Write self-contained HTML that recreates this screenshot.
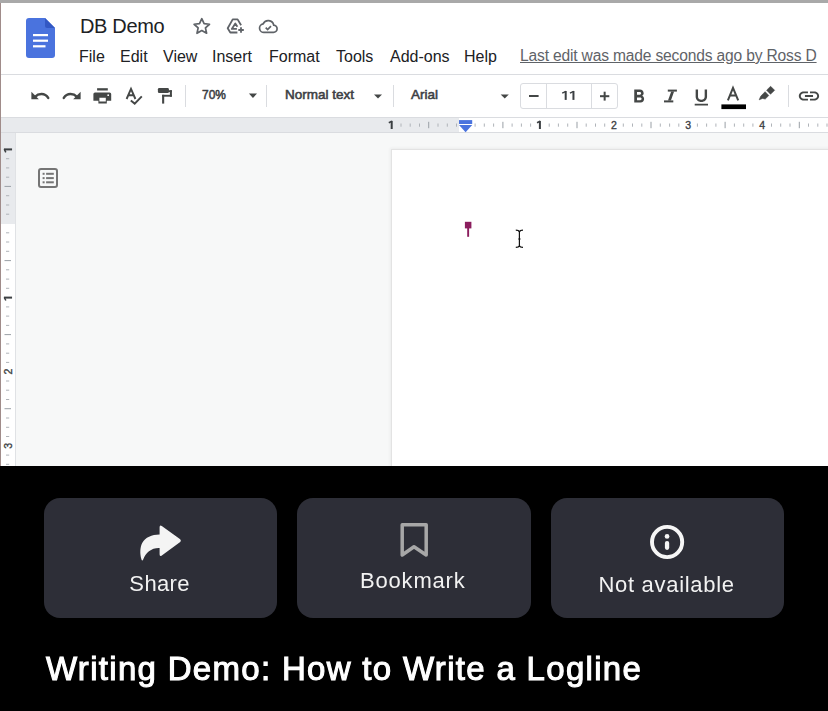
<!DOCTYPE html>
<html><head><meta charset="utf-8">
<style>
*{margin:0;padding:0;box-sizing:border-box}
html,body{width:828px;height:711px;overflow:hidden;background:#000;font-family:"Liberation Sans",sans-serif}
.a{position:absolute}
.ctext,.vt{will-change:transform}
.t{position:absolute;white-space:nowrap;line-height:1}
#app{position:absolute;left:0;top:0;width:828px;height:466px;background:#fff;overflow:hidden}
.menu{font-size:16px;color:#202124}
.rd{font-family:"Liberation Sans",sans-serif;font-size:10.5px;fill:#3c4043;stroke:#3c4043;stroke-width:0.35px}
.tb{font-size:13.5px;color:#3c4043;-webkit-text-stroke:0.55px #3c4043}
.card{position:absolute;top:498px;height:120px;background:#2d2e37;border-radius:16px}
.ctext{position:absolute;left:0;right:0;text-align:center;white-space:nowrap;line-height:1;font-size:22px;color:#f2f2f2;letter-spacing:0.65px}
</style></head><body>
<div id="app">
  <!-- top gray bar -->
  <div class="a" style="left:0;top:0;width:828px;height:3px;background:#a9a9a9"></div>
  <!-- left border -->
  <div class="a" style="left:0;top:3px;width:1px;height:463px;background:#a08c8a"></div>
  <!-- header line -->
  <div class="a" style="left:1px;top:74px;width:827px;height:1px;background:#dadce0"></div>

  <div class="t" style="left:80px;top:16px;font-size:20px;letter-spacing:-0.35px;color:#202124">DB Demo</div>

  <!-- menu -->
  <div class="t menu" style="left:79px;top:48.5px">File</div>
  <div class="t menu" style="left:120px;top:48.5px">Edit</div>
  <div class="t menu" style="left:163px;top:48.5px">View</div>
  <div class="t menu" style="left:212px;top:48.5px">Insert</div>
  <div class="t menu" style="left:269px;top:48.5px">Format</div>
  <div class="t menu" style="left:336px;top:48.5px">Tools</div>
  <div class="t menu" style="left:390px;top:48.5px">Add-ons</div>
  <div class="t menu" style="left:464px;top:48.5px">Help</div>
  <div class="t" style="left:520px;top:47.9px;font-size:15.6px;letter-spacing:-0.17px;color:#5f6368;text-decoration:underline">Last edit was made seconds ago by Ross D</div>

  <!-- toolbar text -->
  <div class="t tb" style="left:202px;top:88px;transform:scaleX(0.885);transform-origin:0 0">70%</div>
  <div class="t tb" style="left:285px;top:88px">Normal text</div>
  <div class="t tb" style="left:411px;top:88px">Arial</div>
    <!-- font size box -->
  <div class="a" style="left:520px;top:83px;width:98px;height:26px;border:1px solid #dadce0;border-radius:3px"></div>
  <div class="a" style="left:546px;top:84px;width:1px;height:24px;background:#dadce0"></div>
  <div class="a" style="left:591px;top:84px;width:1px;height:24px;background:#dadce0"></div>

  <!-- ruler band -->
  <div class="a" style="left:1px;top:117px;width:827px;height:16px;background:#e8eaed;border-top:1px solid #dadce0;border-bottom:1px solid #dadce0"></div>
  <div class="a" style="left:459px;top:118px;width:369px;height:14px;background:#fff"></div>
  <!-- doc area -->
  <div class="a" style="left:1px;top:133px;width:827px;height:333px;background:#f7f8f8"></div>
  <!-- page -->
  <div class="a" style="left:391px;top:149px;width:440px;height:330px;background:#fff;border-left:1px solid #e3e3e3;border-top:1px solid #e3e3e3;box-shadow:-1px -1px 3px rgba(0,0,0,0.05)"></div>
  <!-- vertical ruler -->
  <div class="a" style="left:1px;top:133px;width:15px;height:333px;background:#fff;border-right:1px solid #e0e2e5"></div>
  <div class="a" style="left:1px;top:133px;width:14px;height:90.5px;background:#e8eaed"></div>
  <!-- icon overlay in page coordinates -->
  <svg class="a" style="left:0;top:0" width="828" height="466" viewBox="0 0 828 466">
    <!-- docs logo -->
    <g transform="translate(26 18)">
      <path d="M3 0 H19 L29 10 V37 Q29 40 26 40 H3 Q0 40 0 37 V3 Q0 0 3 0 Z" fill="#4a73de"/>
      <path d="M19 0 L29 10 H21 Q19 10 19 8 Z" fill="#3358c4"/>
      <rect x="7" y="16" width="15" height="2.2" fill="#fff"/>
      <rect x="7" y="21.6" width="15" height="2.2" fill="#fff"/>
      <rect x="7" y="27.2" width="12.5" height="2.2" fill="#fff"/>
    </g>
    <!-- star -->
    <path d="M201.8 18.7l2.3 5 5.4.55-4.05 3.65 1.15 5.35-4.8-2.75-4.8 2.75 1.15-5.35-4.05-3.65 5.4-.55z" fill="none" stroke="#5f6368" stroke-width="1.7" stroke-linejoin="round"/>
    <!-- drive add -->
    <g fill="none" stroke="#5f6368" stroke-width="1.8" stroke-linejoin="round">
      <path d="M237.4 32.5 H230.3 L227.7 28.2 L232.7 19.4 H237.6 L241.1 25.2"/>
      <path d="M236.9 28.9 H231.8 L235.3 23.5 L237.4 26.8"/>
      <path d="M241 27.3 V32.7 M238.3 30 H243.8"/>
    </g>
    <!-- cloud -->
    <g fill="none" stroke="#5f6368" stroke-width="1.7">
      <path d="M264.5 32.3h8.8a3.6 3.6 0 0 0 .4-7.2 5.6 5.6 0 0 0-10.6-1.2 4.2 4.2 0 0 0 1.4 8.4z"/>
      <path d="M265.7 27.6l1.9 1.9 3.4-3.4"/>
    </g>

    <!-- undo -->
    <g fill="#444746">
      <path d="M31.4 91.8 V99.2 H38.8 Z"/>
      <path d="M80.6 91.8 V99.2 H73.2 Z"/>
    </g>
    <g fill="none" stroke="#444746" stroke-width="2.5" stroke-linecap="round">
      <path d="M35 96.8 C38.5 93.3 44.8 92.6 48.2 97.9"/>
      <path d="M77 96.8 C73.5 93.3 67.2 92.6 63.8 97.9"/>
    </g>
    <!-- print -->
    <g fill="#444746">
      <rect x="97.1" y="88.2" width="10.7" height="2.3"/>
      <path fill-rule="evenodd" d="M95 92.4 H109.6 Q111.2 92.4 111.2 94 V100.8 H106.8 V103.6 H98.4 V100.8 H93.4 V94 Q93.4 92.4 95 92.4 Z M99.4 97.7 H105.8 V101.6 H99.4 Z"/>
    </g>
    <circle cx="108.2" cy="95.2" r="0.9" fill="#fff"/>
    <!-- spellcheck -->
    <g fill="none" stroke="#444746" stroke-width="1.9">
      <path d="M126.6 99 L131 88.8 L135.4 99 M128.2 95.2 H133.8"/>
      <path d="M130.8 100.5 L134.7 103.6 L141.8 96.3"/>
    </g>
    <!-- paint format -->
    <g fill="#444746">
      <rect x="157.9" y="88.05" width="11" height="5.05" rx="1.3"/>
      <rect x="168" y="90.25" width="3.9" height="1.9"/>
      <rect x="169.9" y="90.25" width="2" height="6.45"/>
      <rect x="162.1" y="94.8" width="9.8" height="1.9"/>
      <rect x="162.1" y="94.8" width="2.1" height="8.8"/>
    </g>
    <!-- separators -->
    <g fill="#dadce0">
      <rect x="185" y="85" width="1" height="22"/>
      <rect x="266" y="85" width="1" height="22"/>
      <rect x="393" y="85" width="1" height="22"/>
      <rect x="788" y="85" width="1" height="22"/>
    </g>
    <!-- dropdown triangles -->
    <g fill="#444746">
      <path d="M248.9 93.6 H257 L252.95 98 Z"/>
      <path d="M374 94.4 H382 L378 98.6 Z"/>
      <path d="M500.7 94.4 H508.8 L504.75 98.6 Z"/>
    </g>
    <!-- 11 -->
    <g fill="#3c4043">
      <rect x="564.7" y="91" width="2" height="8.9"/>
      <rect x="572.45" y="91" width="2" height="8.9"/>
    </g>
    <g stroke="#3c4043" stroke-width="1.4" fill="none">
      <path d="M562.2 93.2 L566 91.4"/>
      <path d="M569.95 93.2 L573.75 91.4"/>
    </g>
    <!-- minus plus -->
    <g fill="#444746">
      <rect x="529" y="95" width="9.6" height="2"/>
      <rect x="600" y="95.2" width="9.3" height="2"/>
      <rect x="603.65" y="91.7" width="2" height="8.9"/>
    </g>
    <!-- bold -->
    <path transform="translate(627.8 85.9) scale(0.92)" fill="#444746" d="M15.6 10.79c.97-.67 1.65-1.77 1.65-2.79 0-2.26-1.75-4-4-4H7v14h7.04c2.09 0 3.71-1.7 3.71-3.79 0-1.52-.86-2.82-2.15-3.42zM10 6.5h3c.83 0 1.5.67 1.5 1.5s-.67 1.5-1.5 1.5h-3v-3zm3.5 9H10v-3h3.5c.83 0 1.5.67 1.5 1.5s-.67 1.5-1.5 1.5z"/>
    <!-- italic -->
    <g fill="#444746">
      <rect x="667.8" y="89.6" width="9.1" height="2"/>
      <rect x="664" y="100.4" width="9.3" height="2"/>
      <path d="M671.2 91.4 H674.1 L670.9 100.6 H668 Z"/>
    </g>
    <!-- underline -->
    <path transform="translate(689.95 86.96) scale(0.95 0.88)" fill="#444746" d="M12 17c3.31 0 6-2.69 6-6V3h-2.5v8c0 1.93-1.57 3.5-3.5 3.5S8.5 12.93 8.5 11V3H6v8c0 3.31 2.69 6 6 6zm-7 2v2h14v-2H5z"/>
    <!-- text color A -->
    <path d="M727.9 100.3 L733 87.9 L738.2 100.3 M729.6 95.4 H736.4" fill="none" stroke="#444746" stroke-width="2"/>
    <rect x="721.4" y="104.4" width="24.6" height="4.7" fill="#000"/>
    <!-- highlighter -->
    <g fill="#444746" stroke="#444746" stroke-width="0.6" stroke-linejoin="round">
      <path d="M770.6 86.3 L774.6 90.3 L770.5 94.2 L766.6 90.2 Z"/>
      <path d="M765.1 91.7 L768.8 95.5 L765.2 99.1 L762.6 98.4 L759.2 99.8 L760.7 96.3 Z"/>
    </g>
    <!-- link -->
    <path transform="translate(796.8 85.2) scale(1.015 0.9)" fill="#444746" d="M3.9 12c0-1.71 1.39-3.1 3.1-3.1h4V7H7c-2.76 0-5 2.24-5 5s2.24 5 5 5h4v-1.9H7c-1.71 0-3.1-1.39-3.1-3.1zM8 13h8v-2H8v2zm9-6h-4v1.9h4c1.71 0 3.1 1.39 3.1 3.1s-1.39 3.1-3.1 3.1h-4V17h4c2.76 0 5-2.24 5-5s-2.24-5-5-5z"/>

    <!-- outline icon -->
    <g fill="none" stroke="#757575" stroke-width="2">
      <rect x="39" y="169" width="18" height="18" rx="2"/>
    </g>
    <g fill="#757575">
      <rect x="42.6" y="172.8" width="2" height="2"/>
      <rect x="42.6" y="177.1" width="2" height="2"/>
      <rect x="42.6" y="181.3" width="2" height="2"/>
      <rect x="46.1" y="172.8" width="7.7" height="2"/>
      <rect x="46.1" y="177.1" width="7.7" height="2"/>
      <rect x="46.1" y="181.3" width="7.7" height="2"/>
    </g>

    <!-- ruler ticks -->
    <g fill="#3c4043"><rect x="390.70" y="120.90" width="2" height="8.1"/><path d="M388.80 122.75 L391.90 121.25" stroke="#3c4043" stroke-width="1.5"/></g>
    <rect x="400.5" y="123.5" width="1" height="3.2" fill="#b0b4b9"/>
    <rect x="409.7" y="123.5" width="1" height="3.2" fill="#b0b4b9"/>
    <rect x="419.0" y="123.5" width="1" height="3.2" fill="#b0b4b9"/>
    <rect x="428.2" y="121.8" width="1" height="6.4" fill="#9aa0a6"/>
    <rect x="437.5" y="123.5" width="1" height="3.2" fill="#b0b4b9"/>
    <rect x="446.8" y="123.5" width="1" height="3.2" fill="#b0b4b9"/>
    <rect x="456.0" y="123.5" width="1" height="3.2" fill="#b0b4b9"/>
    <rect x="474.6" y="123.5" width="1" height="3.2" fill="#b0b4b9"/>
    <rect x="483.8" y="123.5" width="1" height="3.2" fill="#b0b4b9"/>
    <rect x="493.1" y="123.5" width="1" height="3.2" fill="#b0b4b9"/>
    <rect x="502.4" y="121.8" width="1" height="6.4" fill="#9aa0a6"/>
    <rect x="511.6" y="123.5" width="1" height="3.2" fill="#b0b4b9"/>
    <rect x="520.9" y="123.5" width="1" height="3.2" fill="#b0b4b9"/>
    <rect x="530.1" y="123.5" width="1" height="3.2" fill="#b0b4b9"/>
    <g fill="#3c4043"><rect x="538.90" y="120.90" width="2" height="8.1"/><path d="M537.00 122.75 L540.10 121.25" stroke="#3c4043" stroke-width="1.5"/></g>
    <rect x="548.7" y="123.5" width="1" height="3.2" fill="#b0b4b9"/>
    <rect x="557.9" y="123.5" width="1" height="3.2" fill="#b0b4b9"/>
    <rect x="567.2" y="123.5" width="1" height="3.2" fill="#b0b4b9"/>
    <rect x="576.5" y="121.8" width="1" height="6.4" fill="#9aa0a6"/>
    <rect x="585.7" y="123.5" width="1" height="3.2" fill="#b0b4b9"/>
    <rect x="595.0" y="123.5" width="1" height="3.2" fill="#b0b4b9"/>
    <rect x="604.2" y="123.5" width="1" height="3.2" fill="#b0b4b9"/>
    <text x="614.0" y="128.9" text-anchor="middle" class="rd">2</text>
    <rect x="622.8" y="123.5" width="1" height="3.2" fill="#b0b4b9"/>
    <rect x="632.0" y="123.5" width="1" height="3.2" fill="#b0b4b9"/>
    <rect x="641.3" y="123.5" width="1" height="3.2" fill="#b0b4b9"/>
    <rect x="650.5" y="121.8" width="1" height="6.4" fill="#9aa0a6"/>
    <rect x="659.8" y="123.5" width="1" height="3.2" fill="#b0b4b9"/>
    <rect x="669.1" y="123.5" width="1" height="3.2" fill="#b0b4b9"/>
    <rect x="678.3" y="123.5" width="1" height="3.2" fill="#b0b4b9"/>
    <text x="688.1" y="128.9" text-anchor="middle" class="rd">3</text>
    <rect x="696.9" y="123.5" width="1" height="3.2" fill="#b0b4b9"/>
    <rect x="706.1" y="123.5" width="1" height="3.2" fill="#b0b4b9"/>
    <rect x="715.4" y="123.5" width="1" height="3.2" fill="#b0b4b9"/>
    <rect x="724.6" y="121.8" width="1" height="6.4" fill="#9aa0a6"/>
    <rect x="733.9" y="123.5" width="1" height="3.2" fill="#b0b4b9"/>
    <rect x="743.2" y="123.5" width="1" height="3.2" fill="#b0b4b9"/>
    <rect x="752.4" y="123.5" width="1" height="3.2" fill="#b0b4b9"/>
    <text x="762.2" y="128.9" text-anchor="middle" class="rd">4</text>
    <rect x="771.0" y="123.5" width="1" height="3.2" fill="#b0b4b9"/>
    <rect x="780.2" y="123.5" width="1" height="3.2" fill="#b0b4b9"/>
    <rect x="789.5" y="123.5" width="1" height="3.2" fill="#b0b4b9"/>
    <rect x="798.8" y="121.8" width="1" height="6.4" fill="#9aa0a6"/>
    <rect x="808.0" y="123.5" width="1" height="3.2" fill="#b0b4b9"/>
    <rect x="817.3" y="123.5" width="1" height="3.2" fill="#b0b4b9"/>
    <rect x="826.5" y="123.5" width="1" height="3.2" fill="#b0b4b9"/>
    <g fill="#3c4043" transform="rotate(-90 8 149.40)"><rect x="7.00" y="145.35" width="2" height="8.1"/><path d="M5.10 147.20 L8.20 145.70" stroke="#3c4043" stroke-width="1.5"/></g>
    <rect x="6" y="158.2" width="3.2" height="1" fill="#b0b4b9"/>
    <rect x="6" y="167.4" width="3.2" height="1" fill="#b0b4b9"/>
    <rect x="6" y="176.7" width="3.2" height="1" fill="#b0b4b9"/>
    <rect x="4.5" y="185.9" width="6.5" height="1" fill="#9aa0a6"/>
    <rect x="6" y="195.2" width="3.2" height="1" fill="#b0b4b9"/>
    <rect x="6" y="204.5" width="3.2" height="1" fill="#b0b4b9"/>
    <rect x="6" y="213.7" width="3.2" height="1" fill="#b0b4b9"/>
    <rect x="6" y="232.3" width="3.2" height="1" fill="#b0b4b9"/>
    <rect x="6" y="241.5" width="3.2" height="1" fill="#b0b4b9"/>
    <rect x="6" y="250.8" width="3.2" height="1" fill="#b0b4b9"/>
    <rect x="4.5" y="260.1" width="6.5" height="1" fill="#9aa0a6"/>
    <rect x="6" y="269.3" width="3.2" height="1" fill="#b0b4b9"/>
    <rect x="6" y="278.6" width="3.2" height="1" fill="#b0b4b9"/>
    <rect x="6" y="287.8" width="3.2" height="1" fill="#b0b4b9"/>
    <g fill="#3c4043" transform="rotate(-90 8 297.60)"><rect x="7.00" y="293.55" width="2" height="8.1"/><path d="M5.10 295.40 L8.20 293.90" stroke="#3c4043" stroke-width="1.5"/></g>
    <rect x="6" y="306.4" width="3.2" height="1" fill="#b0b4b9"/>
    <rect x="6" y="315.6" width="3.2" height="1" fill="#b0b4b9"/>
    <rect x="6" y="324.9" width="3.2" height="1" fill="#b0b4b9"/>
    <rect x="4.5" y="334.1" width="6.5" height="1" fill="#9aa0a6"/>
    <rect x="6" y="343.4" width="3.2" height="1" fill="#b0b4b9"/>
    <rect x="6" y="352.7" width="3.2" height="1" fill="#b0b4b9"/>
    <rect x="6" y="361.9" width="3.2" height="1" fill="#b0b4b9"/>
    <text x="0" y="0" text-anchor="middle" class="rd" transform="translate(12 371.7) rotate(-90)">2</text>
    <rect x="6" y="380.5" width="3.2" height="1" fill="#b0b4b9"/>
    <rect x="6" y="389.7" width="3.2" height="1" fill="#b0b4b9"/>
    <rect x="6" y="399.0" width="3.2" height="1" fill="#b0b4b9"/>
    <rect x="4.5" y="408.2" width="6.5" height="1" fill="#9aa0a6"/>
    <rect x="6" y="417.5" width="3.2" height="1" fill="#b0b4b9"/>
    <rect x="6" y="426.8" width="3.2" height="1" fill="#b0b4b9"/>
    <rect x="6" y="436.0" width="3.2" height="1" fill="#b0b4b9"/>
    <text x="0" y="0" text-anchor="middle" class="rd" transform="translate(12 445.8) rotate(-90)">3</text>
    <rect x="6" y="454.6" width="3.2" height="1" fill="#b0b4b9"/>
    <rect x="6" y="463.8" width="3.2" height="1" fill="#b0b4b9"/>
    <!-- ruler indent marker -->
    <rect x="459" y="120.1" width="13.2" height="3.9" fill="#4a73de"/>
    <path d="M459 125.1 H472.2 L465.6 132.3 Z" fill="#4a73de"/>

    <!-- bookmark marker in doc -->
    <rect x="464.9" y="221.8" width="6.5" height="6.6" fill="#8b1d5e"/>
    <rect x="467.2" y="227" width="1.9" height="9.8" fill="#8b1d5e"/>
    <!-- I-beam cursor -->
    <g fill="none" stroke="#111" stroke-width="1.2">
      <path d="M515.8 230.2 Q518.8 230.2 519.4 232 Q520 230.2 523 230.2 M519.4 232 V245.6 M515.8 247.4 Q518.8 247.4 519.4 245.6 Q520 247.4 523 247.4 M518.2 239 H520.6"/>
    </g>
  </svg>
</div>

<!-- bottom cards -->
<div class="card" style="left:44px;width:233px">
  <div class="ctext" style="top:75.4px;left:-2.2px;letter-spacing:0.35px">Share</div>
</div>
<div class="card" style="left:297px;width:234px">
  <div class="ctext" style="top:72.1px;left:-1.6px;letter-spacing:0.8px">Bookmark</div>
</div>
<div class="card" style="left:551px;width:233px">
  <div class="ctext" style="top:76.4px;left:-2.2px;letter-spacing:0.7px">Not available</div>
</div>

<svg class="a" style="left:0;top:466px" width="828" height="245" viewBox="0 466 828 245">
  <!-- share arrow -->
  <path fill="#f4f4f4" d="M159.6 534.4 V527.3 Q159.6 524.6 161.8 526 L180.2 539.2 Q181.6 540.6 180.2 542 L161.8 555.5 Q159.6 557 159.6 554.2 V547.9 C151.5 547.6 145.5 552.5 143.2 559.6 Q142.2 561.6 141.4 559.2 C139.6 553 140.2 547 142.2 543 C145.5 537 151.5 534.6 159.6 534.4 Z"/>
  <!-- bookmark -->
  <path d="M402.2 524.7 H426.2 V555 L414 546.8 L402.2 555 Z" fill="none" stroke="#a7a7a7" stroke-width="3.5" stroke-linejoin="round"/>
  <!-- info -->
  <circle cx="667.1" cy="542" r="15.1" fill="none" stroke="#f6f6f6" stroke-width="3.9"/>
  <circle cx="667.05" cy="536.4" r="2.35" fill="#f6f6f6"/>
  <rect x="664.9" y="541" width="4.3" height="8.9" rx="2.1" fill="#f6f6f6"/>
</svg>

<div class="t vt" style="left:46px;top:652px;font-size:33px;color:#fff;-webkit-text-stroke:1.05px #fff;letter-spacing:1.31px">Writing Demo: How to Write a Logline</div>
</body></html>
